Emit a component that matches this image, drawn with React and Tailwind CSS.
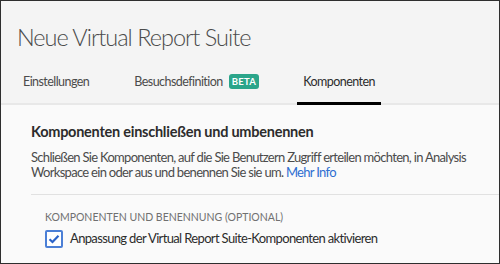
import React from 'react';

const tabs = [
  { key: 'settings', label: 'Einstellungen' },
  { key: 'visit', label: 'Besuchsdefinition', beta: true },
  { key: 'components', label: 'Komponenten', active: true }
];

const App = () => {
  return (
    <div
      className="w-[500px] h-[264px] overflow-hidden border border-[#2e2e2e] bg-[#fafafa] flex flex-col"
      style={{ fontFamily: 'Lato, "Open Sans", "Liberation Sans", sans-serif' }}
    >
      {/* Header */}
      <div className="bg-[#f4f4f4] border-b-2 border-[#e8e8e8]">
        <h1 className="pl-4 pt-[20px] text-[23.5px] leading-[32px] font-light text-[#4b4b4b] tracking-[-1px]">
          Neue Virtual Report Suite
        </h1>
        <div className="flex items-end mt-[19px] pl-[16px]">
          {tabs.map(tab => (
            <div
              key={tab.key}
              className={
                tab.key === 'settings'
                  ? 'mr-[33px]'
                  : tab.key === 'visit'
                  ? 'mr-[32px]'
                  : ''
              }
            >
              <div
                className={
                  'flex items-start gap-[6px] h-[33px] -mb-[2px] px-[6px] pt-[1px] text-[12.5px] leading-[18px] tracking-[-0.55px] ' +
                  (tab.active
                    ? 'border-b-[3px] border-black text-[#2c2c2c]'
                    : 'border-b-[3px] border-transparent text-[#4b4b4b]')
                }
              >
                <span>{tab.label}</span>
                {tab.beta && (
                  <span className="mt-[1px] bg-[#2ba58a] text-white text-[9.5px] font-bold leading-[15px] px-[3px] rounded-[3px] tracking-[0.3px]">
                    BETA
                  </span>
                )}
              </div>
            </div>
          ))}
        </div>
      </div>

      {/* Content */}
      <div className="flex-1 pl-[30px] pt-[17px]">
        <h2 className="text-[14.5px] font-bold text-[#2c2c2c] leading-[20px] tracking-[-0.25px]">
          Komponenten einschließen und umbenennen
        </h2>
        <p className="mt-[8px] text-[13px] leading-[15px] text-[#4b4b4b] tracking-[-0.7px] whitespace-nowrap">
          Schließen Sie Komponenten, auf die Sie Benutzern Zugriff erteilen möchten, in Analysis
          <br />
          Workspace ein oder aus und benennen Sie sie um.{' '}
          <a className="text-[#2d6ed1]">Mehr Info</a>
        </p>
        <div className="mt-[14px] h-px bg-[#e1e1e1]" />
        <div className="mt-[15px] pl-[14px]">
          <div className="text-[10.5px] tracking-[0px] text-[#707070] leading-[14px]">
            KOMPONENTEN UND BENENNUNG (OPTIONAL)
          </div>
          <label className="mt-[5px] flex items-center gap-[7px]">
            <span className="w-[18px] h-[18px] border-2 border-[#4b7fd6] rounded-[2px] bg-white flex items-center justify-center">
              <svg width="12" height="10" viewBox="0 0 12 10">
                <path d="M1.5 5.2 L4.5 8 L10.5 1.8" fill="none" stroke="#2b63c9" strokeWidth="2.2" />
              </svg>
            </span>
            <span className="text-[13px] text-[#2c2c2c] tracking-[-0.65px]">
              Anpassung der Virtual Report Suite-Komponenten aktivieren
            </span>
          </label>
        </div>
      </div>
    </div>
  );
};

export default App;
